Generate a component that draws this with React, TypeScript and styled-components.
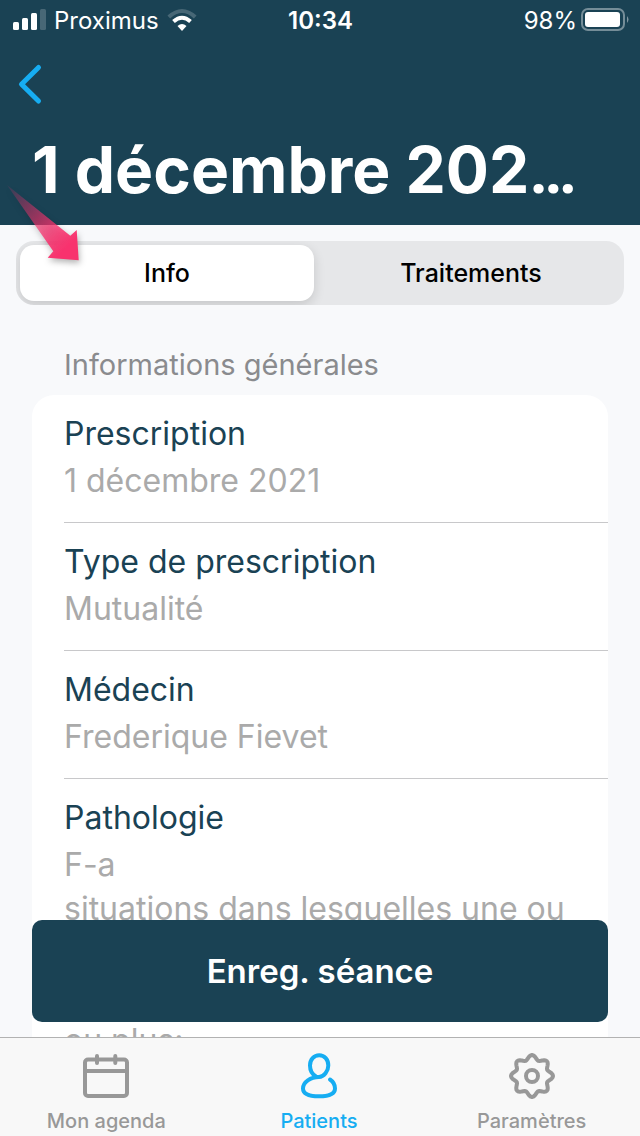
import React, { useState } from "react";
import styled, { createGlobalStyle } from "styled-components";

const navy = "#1a4254";
const blue = "#16adf2";

const GlobalStyle = createGlobalStyle`
  * { box-sizing: border-box; }
  body { margin: 0; font-family: Inter, "Liberation Sans", sans-serif; background: #f8f9fb; }
  button { font-family: inherit; border: 0; background: none; padding: 0; cursor: pointer; }
  h1, h2, dl, dd { margin: 0; }
`;

const Screen = styled.div`
  position: relative;
  display: flex;
  flex-direction: column;
  height: 100vh;
  overflow: hidden;
`;

const Header = styled.header`
  flex: none;
  background: ${navy};
  color: #fff;
`;

const StatusBar = styled.div`
  display: grid;
  grid-template-columns: 1fr auto 1fr;
  align-items: center;
  height: 40px;
  padding: 0 11px 0 12px;
  font-size: 24px;
  line-height: 32px;
`;

const StatusGroup = styled.div<{ $end?: boolean }>`
  display: flex;
  align-items: center;
  gap: ${(p) => (p.$end ? 4 : 8)}px;
  justify-content: ${(p) => (p.$end ? "flex-end" : "flex-start")};
`;

const StatusText = styled.span<{ $strong?: boolean }>`
  padding-top: 2px;
  display: block;
  font-weight: ${(p) => (p.$strong ? 600 : 400)};
`;

const BackButton = styled.button`
  display: block;
  margin: 20px 0 0 14px;
  height: 48px;
`;

const Title = styled.h1`
  padding: 22px 32px 15px;
  font-size: 64px;
  line-height: 80px;
  font-weight: 700;
  white-space: nowrap;
  overflow: hidden;
`;

const Ellipsis = styled.span`
  font-family: Roboto, sans-serif;
  line-height: 1;
`;

const Body = styled.main`
  position: relative;
  flex: 1;
  min-height: 0;
  display: flex;
  flex-direction: column;
`;

const Segmented = styled.div`
  flex: none;
  display: grid;
  grid-template-columns: 1fr 1fr;
  margin: 16px 16px 0;
  height: 64px;
  border-radius: 18px;
  background: #e6e7e9;
  overflow: hidden;
`;

const Segment = styled.button<{ $active: boolean }>`
  margin: 4px 6px 4px 4px;
  border-radius: 14px;
  font-size: 25px;
  font-weight: 500;
  color: #000;
  background: ${(p) => (p.$active ? "#fff" : "transparent")};
  box-shadow: ${(p) => (p.$active ? "0 4px 12px rgba(0, 0, 0, 0.14)" : "none")};
`;

const Scroller = styled.div`
  flex: 1;
  min-height: 0;
  overflow-y: auto;
  scrollbar-width: none;
  padding: 40px 32px 0;
`;

const SectionTitle = styled.h2`
  padding: 0 32px;
  margin-bottom: 10px;
  font-size: 29px;
  line-height: 40px;
  font-weight: 400;
  color: #8a8b8e;
`;

const Card = styled.dl`
  padding-left: 32px;
  border-radius: 22px;
  background: #fff;
`;

const Field = styled.div`
  padding: 17px 0 19px;
  border-bottom: 1px solid #c8c8ca;
  &:last-child { border-bottom: 0; }
`;

const FieldName = styled.dt`
  margin-bottom: 3px;
  font-size: 32px;
  line-height: 44px;
  color: ${navy};
`;

const FieldValue = styled.dd`
  font-size: 32px;
  line-height: 44px;
  color: #aaa;
  white-space: pre-line;
`;

const PrimaryButton = styled.button`
  position: absolute;
  left: 32px;
  right: 32px;
  bottom: 15px;
  height: 102px;
  border-radius: 10px;
  background: ${navy};
  color: #fff;
  font-size: 33px;
  font-weight: 600;
`;

const TabBar = styled.nav`
  flex: none;
  display: grid;
  grid-template-columns: repeat(3, 1fr);
  padding: 14px 2px 3px 0;
  border-top: 1px solid #b2b2b2;
  background: #f8f8f8;
`;

const Tab = styled.a<{ $active?: boolean }>`
  display: flex;
  flex-direction: column;
  align-items: center;
  gap: 9px;
  font-size: 20px;
  line-height: 24px;
  font-weight: 500;
  text-decoration: none;
  color: ${(p) => (p.$active ? blue : "#989898")};
`;

const Pointer = styled.svg`
  position: absolute;
  left: 0;
  top: 180px;
  pointer-events: none;
  filter: drop-shadow(1px 3px 3px rgba(0, 0, 0, 0.3));
`;

const gearPath =
  Array.from({ length: 96 }, (_, i) => {
    const a = (i / 96) * Math.PI * 2;
    const r = 18.7 + 2.3 * Math.cos(8 * a);
    return `${i ? "L" : "M"}${(24 + r * Math.cos(a)).toFixed(2)} ${(24 + r * Math.sin(a)).toFixed(2)}`;
  }).join("") + "Z";

const stroke = {
  fill: "none",
  stroke: "currentColor",
  strokeWidth: 4,
  strokeLinecap: "round" as const,
  strokeLinejoin: "round" as const,
};

const SignalIcon = () => (
  <svg width="34" height="22" viewBox="0 0 34 22" fill="#fff" aria-hidden="true">
    <rect x="1" y="13" width="6" height="8" rx="1.5" />
    <rect x="10" y="9" width="6" height="12" rx="1.5" />
    <rect x="19" y="4" width="6" height="17" rx="1.5" />
    <rect x="28" y="0" width="6" height="21" rx="1.5" opacity="0.2" />
  </svg>
);

const WifiIcon = () => (
  <svg width="32" height="24" viewBox="0 0 32 24" fill="none" stroke="#fff" strokeWidth="4" aria-hidden="true">
    <path d="M1.800 9 Q15 -3 28.200 9" opacity="0.2" />
    <path d="M6.500 13.500 Q15 6 23.500 13.500" />
    <path d="M10.500 18 Q15 14 19.500 18 L15 23Z" fill="#fff" stroke="none" />
  </svg>
);

const BatteryIcon = () => (
  <svg width="48" height="24" viewBox="0 0 48 24" aria-hidden="true">
    <rect x="1" y="1" width="42" height="21" rx="6" fill="none" stroke="#fff" strokeOpacity="0.4" strokeWidth="2" />
    <rect x="4" y="4" width="35" height="15" rx="3" fill="#fff" />
    <path d="M46 8 Q49 11.500 46 15Z" fill="#fff" opacity="0.45" />
  </svg>
);

const CalendarIcon = () => (
  <svg width="48" height="48" viewBox="0 0 48 48" {...stroke} aria-hidden="true">
    <rect x="3" y="7.500" width="42" height="36.500" rx="3" />
    <path d="M3 19H45M15 4V11M33.300 4V11" />
  </svg>
);

const PersonIcon = () => (
  <svg width="48" height="48" viewBox="0 0 48 48" {...stroke} aria-hidden="true">
    <path d="M35 27.500C38 29.500 40 33 40 36.500C40 42 33 44.300 24 44.300C15 44.300 8 42 8 36.500C8 30 15.500 25 24 25C29 25 33.300 19 33.300 13.500C33.300 7.500 29.500 3.300 24.200 3.300C19 3.300 15 7.500 15 13.500C15 18 17.500 22.500 21 24.500" />
  </svg>
);

const GearIcon = () => (
  <svg width="48" height="48" viewBox="0 0 48 48" {...stroke} aria-hidden="true">
    <path d={gearPath} />
    <circle cx="24" cy="24" r="6" />
  </svg>
);

const fields = [
  { name: "Prescription", value: "1 décembre 2021" },
  { name: "Type de prescription", value: "Mutualité" },
  { name: "Médecin", value: "Frederique Fievet" },
  { name: "Pathologie", value: "F-a\nsituations dans lesquelles une ou\n\n\nou plus:" },
];

const segments = ["Info", "Traitements"];

export default function App() {
  const [active, setActive] = useState("Info");
  return (
    <Screen>
      <GlobalStyle />
      <Header>
        <StatusBar>
          <StatusGroup>
            <SignalIcon />
            <StatusText>Proximus</StatusText>
            <WifiIcon />
          </StatusGroup>
          <StatusText $strong>10:34</StatusText>
          <StatusGroup $end>
            <StatusText>98%</StatusText>
            <BatteryIcon />
          </StatusGroup>
        </StatusBar>
        <BackButton aria-label="Retour">
          <svg width="32" height="48" viewBox="0 0 32 48" fill="none" stroke={blue} strokeWidth="5" strokeLinecap="round" strokeLinejoin="round">
            <path d="M24.500 7.500L7.500 24.200L24.500 41" />
          </svg>
        </BackButton>
        <Title>1 décembre 202<Ellipsis>…</Ellipsis></Title>
      </Header>
      <Body>
        <Segmented role="tablist">
          {segments.map((s) => (
            <Segment key={s} role="tab" aria-selected={active === s} $active={active === s} onClick={() => setActive(s)}>
              {s}
            </Segment>
          ))}
        </Segmented>
        <Scroller>
          <SectionTitle>Informations générales</SectionTitle>
          <Card>
            {fields.map((f) => (
              <Field key={f.name}>
                <FieldName>{f.name}</FieldName>
                <FieldValue>{f.value}</FieldValue>
              </Field>
            ))}
          </Card>
        </Scroller>
        <PrimaryButton>Enreg. séance</PrimaryButton>
      </Body>
      <TabBar>
        <Tab href="#agenda"><CalendarIcon />Mon agenda</Tab>
        <Tab href="#patients" $active aria-current="page"><PersonIcon />Patients</Tab>
        <Tab href="#parametres"><GearIcon />Paramètres</Tab>
      </TabBar>
      <Pointer width="96" height="96" viewBox="0 0 96 96" aria-hidden="true">
        <defs>
          <linearGradient id="fade" gradientUnits="userSpaceOnUse" x1="7" y1="5" x2="66" y2="68">
            <stop offset="0" stopColor="#f8326e" stopOpacity="0.1" />
            <stop offset="0.800" stopColor="#f8326e" stopOpacity="0.850" />
            <stop offset="1" stopColor="#f8326e" />
          </linearGradient>
        </defs>
        <path d="M7 5L70.300 55.700L76.700 50L78.700 80.300L47.700 77.700L53.300 71.300Z" fill="url(#fade)" />
      </Pointer>
    </Screen>
  );
}
